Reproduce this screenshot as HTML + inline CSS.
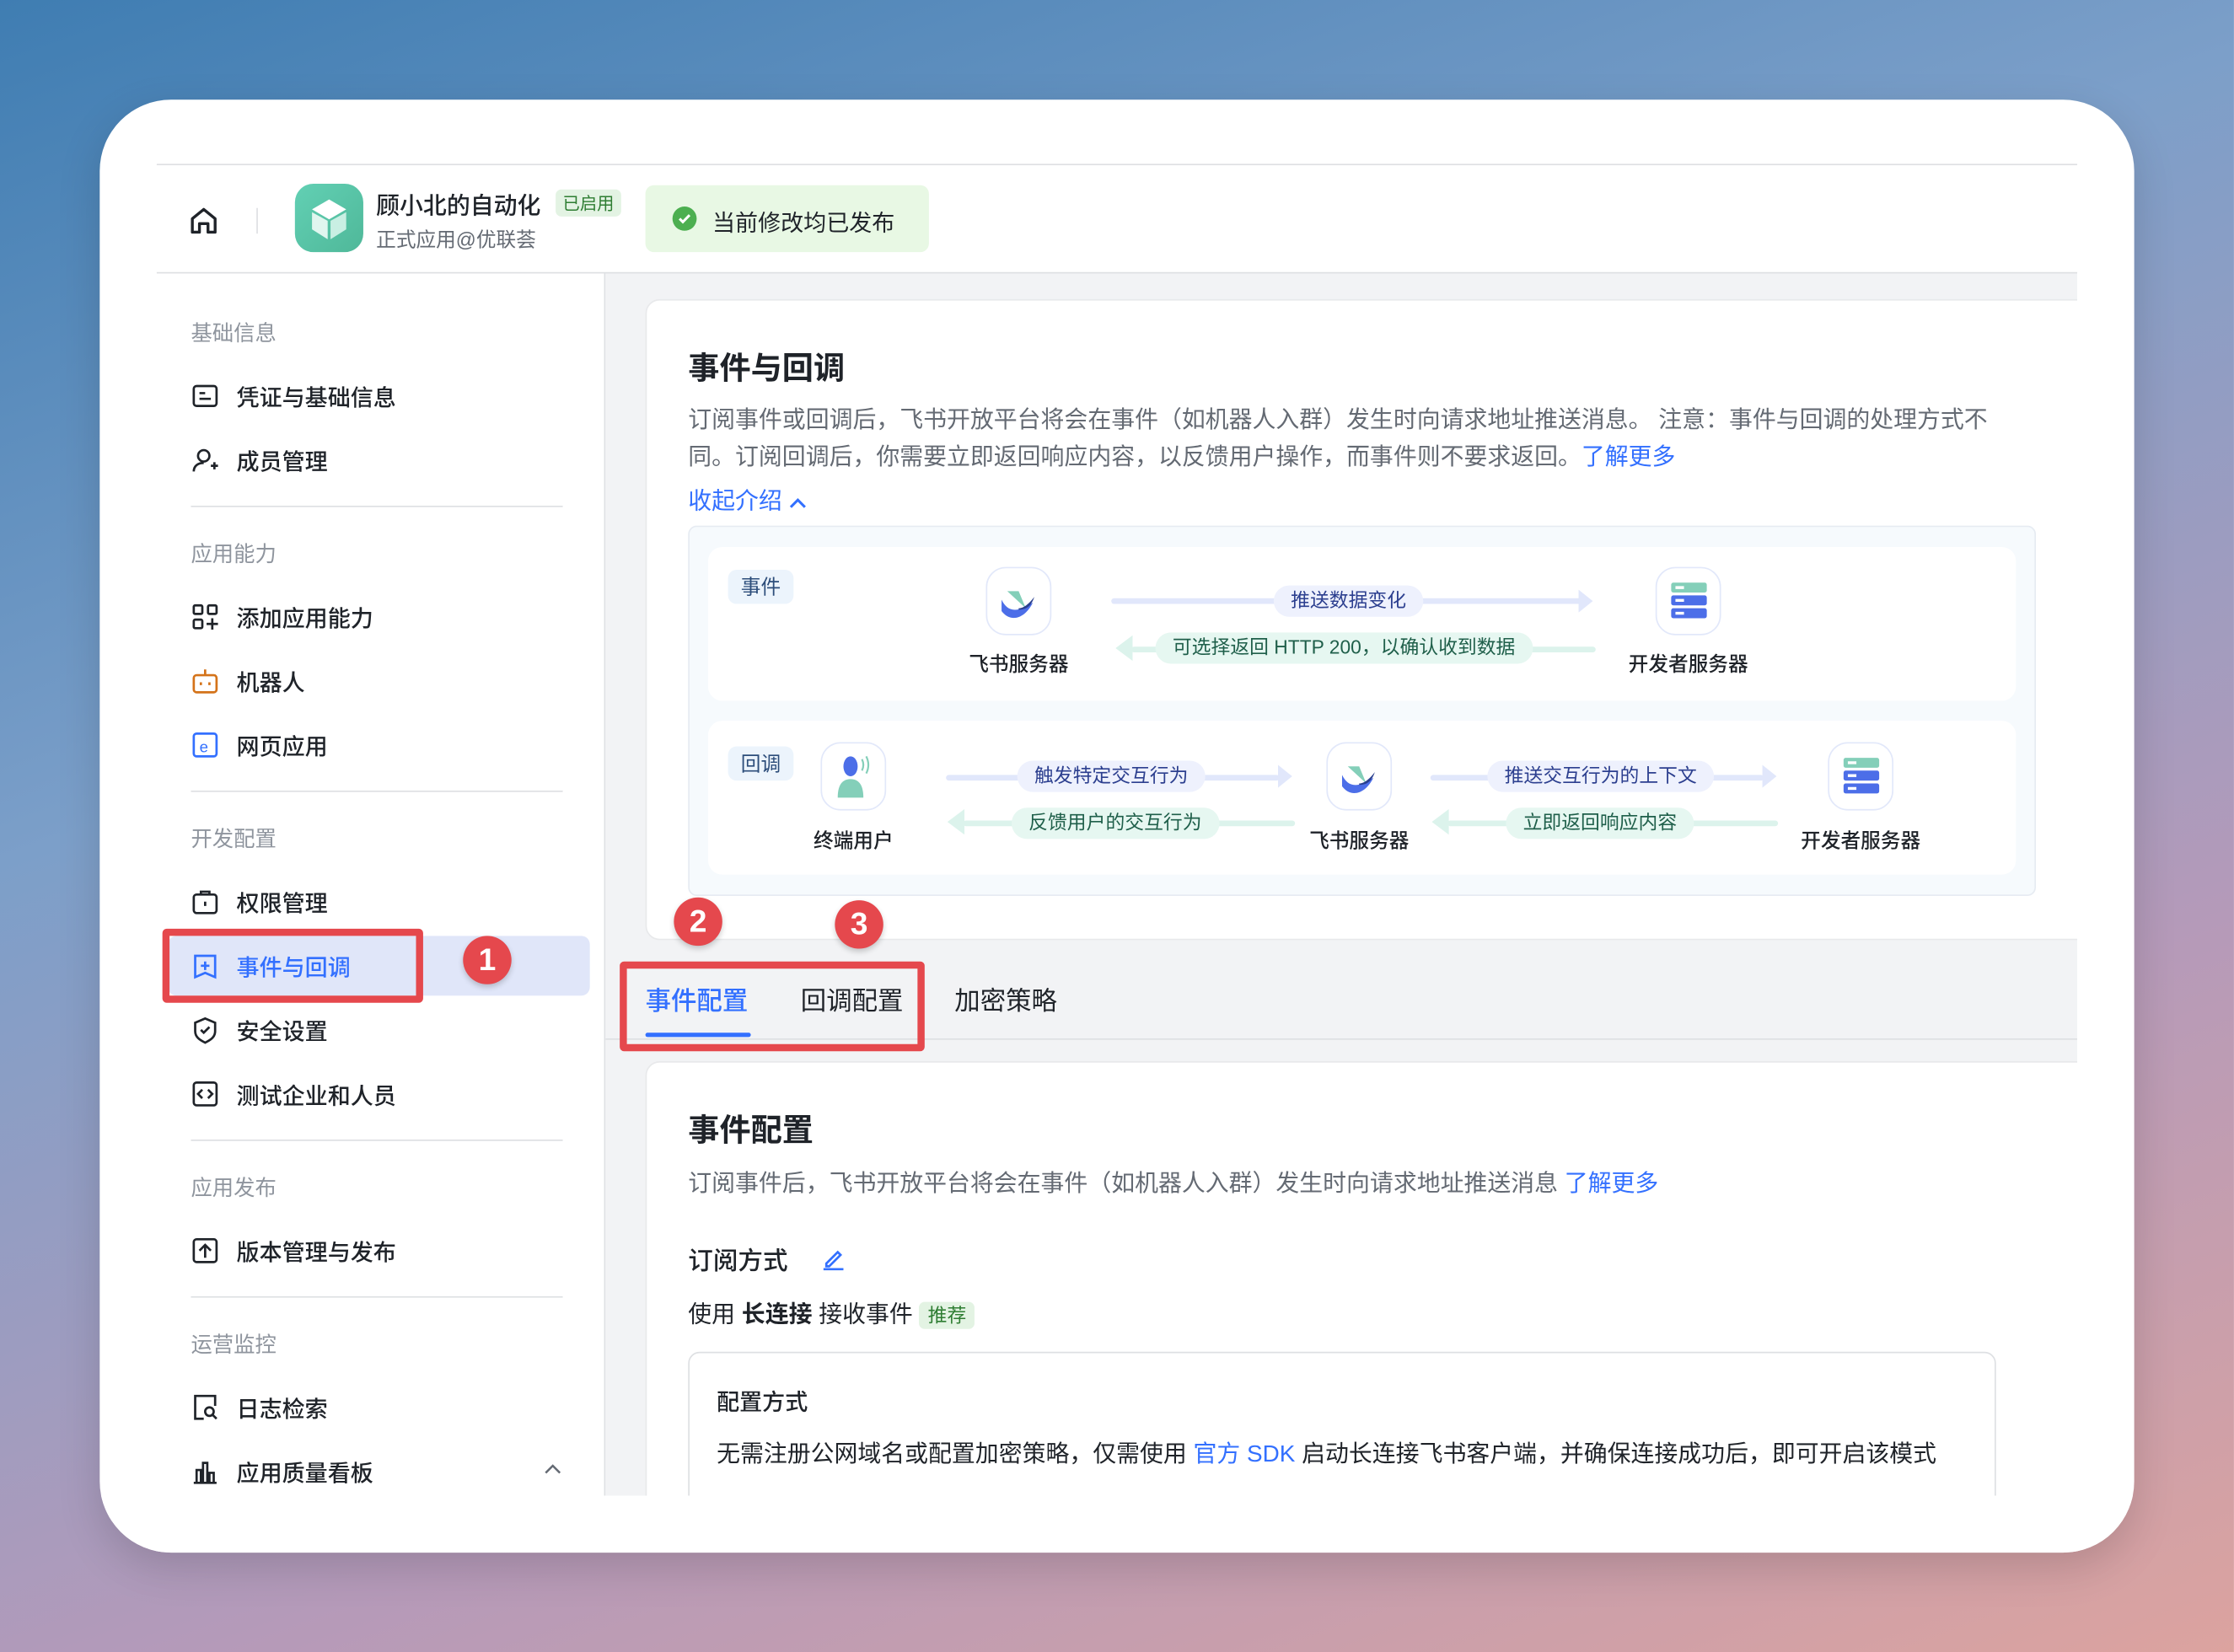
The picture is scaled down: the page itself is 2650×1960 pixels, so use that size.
<!DOCTYPE html>
<html><head><meta charset="utf-8"><style>
*{margin:0;padding:0;box-sizing:border-box}
html,body{width:2650px;height:1960px;overflow:hidden}
body{font-family:"Liberation Sans","Noto Sans CJK SC",sans-serif;color:#1f2329}
#w{position:absolute;left:0;top:0;width:1568px;height:1160px;transform:scale(1.69);transform-origin:0 0;background:linear-gradient(160deg,#3f7db2 0%,#7c9fc9 35%,#b59ab9 70%,#dca39f 100%)}
.a{position:absolute}
#card{left:70px;top:70px;width:1428px;height:1020px;background:#fff;border-radius:50px;box-shadow:0 10px 30px rgba(0,0,0,.15);overflow:hidden}
.nav{position:absolute;left:24px;font-size:16px;display:flex;align-items:center;gap:12px;color:#1f2329;font-weight:500}
.nav svg{width:20px;height:20px}
.grp{position:absolute;left:24px;font-size:15px;color:#8f959e}
.hr{position:absolute;left:24px;width:261px;height:1px;background:#dee0e3}
.pill{position:absolute;height:22px;line-height:22px;padding:0 12px;border-radius:11px;font-size:13.5px}
.pb{background:#eef1fd;color:#2c3f8f}
.pg{background:#e6f7f1;color:#1f5f4a}
.ln{position:absolute;height:4px;border-radius:2px}
.lb{background:#e1e7fb}.lg{background:#dcf3ec}
.lab{position:absolute;font-size:14px;font-weight:500;width:100px;text-align:center}
.ib{position:absolute;width:46px;height:48px;border:1.5px solid #e2e8fa;border-radius:14px;background:#fff}
.tag{position:absolute;background:#ecf4fc;color:#2c4d7a;font-size:14px;border-radius:6px;padding:2px 9px}
.red{position:absolute;border:5px solid #e5484d;border-radius:3px}
.num{position:absolute;width:34px;height:34px;border-radius:50%;background:#e5484d;color:#fff;font-weight:bold;font-size:22px;text-align:center;line-height:34px;box-shadow:0 2px 4px rgba(0,0,0,.2)}
</style></head><body><div id="w">
<div id="card" class="a">
 <div class="a" style="left:40px;top:45px;width:1348px;height:1px;background:#dee0e3"></div>
 <svg class="a" style="left:62px;top:74px" width="22" height="22" viewBox="0 0 22 22" fill="none" stroke="#1f2329" stroke-width="2"><path d="M3 9.5L11 3l8 6.5V19h-5v-6h-6v6H3z" stroke-linejoin="round"/></svg>
 <div class="a" style="left:110px;top:76px;width:1px;height:18px;background:#dee0e3"></div>
 <div class="a" style="left:137px;top:59px;width:48px;height:48px;border-radius:13px;background:linear-gradient(135deg,#62d0b4,#4fb899)">
  <svg width="48" height="48" viewBox="0 0 48 48"><path d="M24 11l12 7-12 7-12-7z" fill="#fff"/><path d="M12 20l11 6v13l-11-7z" fill="#e0f6ef"/><path d="M36 20l-11 6v13l11-7z" fill="#c9efe3"/></svg></div>
 <div class="a" style="left:194px;top:61px;font-size:16.5px;font-weight:500">顾小北的自动化</div>
 <div class="a" style="left:320px;top:63px;font-size:12px;color:#2e7d32;background:#e3f3e3;padding:1px 5px;border-radius:4px">已启用</div>
 <div class="a" style="left:194px;top:88px;font-size:14px;color:#646a73">正式应用@优联荟</div>
 <div class="a" style="left:383px;top:60px;width:199px;height:47px;background:#e8f8e4;border-radius:6px"></div>
 <div class="a" style="left:402px;top:75px;width:17px;height:17px;border-radius:50%;background:#4caf50"><svg width="17" height="17" viewBox="0 0 17 17"><path d="M5 8.5l2.3 2.3L12 6" stroke="#fff" stroke-width="1.8" fill="none"/></svg></div>
 <div class="a" style="left:430px;top:73px;font-size:16px">当前修改均已发布</div>
 <div class="a" style="left:40px;top:121px;width:1348px;height:1px;background:#dee0e3"></div>
 <div class="a" style="left:40px;top:122px;width:314px;height:858px;background:#fff">
  <div class="grp" style="top:31px">基础信息</div>
  <div class="nav" style="top:74px"><svg viewBox="0 0 20 20" fill="none" stroke="#1f2329" stroke-width="1.6"><rect x="2" y="3" width="16" height="14" rx="2"/><path d="M6 8h4M6 12h8"/></svg>凭证与基础信息</div>
  <div class="nav" style="top:119px"><svg viewBox="0 0 20 20" fill="none" stroke="#1f2329" stroke-width="1.6"><circle cx="9" cy="7" r="4"/><path d="M2 18c0-4 3-6 7-6M14 14h5M16.5 11.5v5"/></svg>成员管理</div>
  <div class="hr" style="top:163px"></div>
  <div class="grp" style="top:186px">应用能力</div>
  <div class="nav" style="top:229px"><svg viewBox="0 0 20 20" fill="none" stroke="#1f2329" stroke-width="1.6"><rect x="2" y="2" width="6" height="6" rx="1"/><rect x="12" y="2" width="6" height="6" rx="1"/><rect x="2" y="12" width="6" height="6" rx="1"/><path d="M15 11v8M11 15h8"/></svg>添加应用能力</div>
  <div class="nav" style="top:274px"><svg viewBox="0 0 20 20" fill="none" stroke="#d4731a" stroke-width="1.6"><rect x="2" y="6" width="16" height="12" rx="2"/><path d="M10 2v4M7 11v2M13 11v2"/></svg>机器人</div>
  <div class="nav" style="top:319px"><svg viewBox="0 0 20 20" fill="none" stroke="#3370ff" stroke-width="1.6"><rect x="2" y="2" width="16" height="16" rx="2"/><text x="6" y="15" font-size="11" fill="#3370ff" stroke="none">e</text></svg>网页应用</div>
  <div class="hr" style="top:363px"></div>
  <div class="grp" style="top:386px">开发配置</div>
  <div class="nav" style="top:429px"><svg viewBox="0 0 20 20" fill="none" stroke="#1f2329" stroke-width="1.6"><rect x="2" y="5" width="16" height="13" rx="2"/><path d="M7 5V3h6v2M10 10v3"/></svg>权限管理</div>
  <div class="a" style="left:8px;top:465px;width:296px;height:42px;background:#e0e6f9;border-radius:6px"></div>
  <div class="nav" style="top:474px;color:#3370ff"><svg viewBox="0 0 20 20" fill="none" stroke="#3370ff" stroke-width="1.6"><path d="M3 3h14v15l-7-3-7 3z"/><path d="M10 7v6M7 10h6"/></svg>事件与回调</div>
  <div class="nav" style="top:519px"><svg viewBox="0 0 20 20" fill="none" stroke="#1f2329" stroke-width="1.6"><path d="M10 2l7 3v6c0 4-3 6-7 8-4-2-7-4-7-8V5z"/><path d="M7 10l2 2 4-4"/></svg>安全设置</div>
  <div class="nav" style="top:564px"><svg viewBox="0 0 20 20" fill="none" stroke="#1f2329" stroke-width="1.6"><rect x="2" y="2" width="16" height="16" rx="2"/><path d="M8 7l-3 3 3 3M12 7l3 3-3 3"/></svg>测试企业和人员</div>
  <div class="hr" style="top:608px"></div>
  <div class="grp" style="top:631px">应用发布</div>
  <div class="nav" style="top:674px"><svg viewBox="0 0 20 20" fill="none" stroke="#1f2329" stroke-width="1.6"><rect x="2" y="2" width="16" height="16" rx="2"/><path d="M10 15V6M6 10l4-4 4 4"/></svg>版本管理与发布</div>
  <div class="hr" style="top:718px"></div>
  <div class="grp" style="top:741px">运营监控</div>
  <div class="nav" style="top:784px"><svg viewBox="0 0 20 20" fill="none" stroke="#1f2329" stroke-width="1.6"><path d="M17 9V2H3v16h6"/><circle cx="13" cy="13" r="3"/><path d="M15 15l3 3"/></svg>日志检索</div>
  <div class="nav" style="top:829px"><svg viewBox="0 0 20 20" fill="none" stroke="#1f2329" stroke-width="1.6"><path d="M2 18h16M4 18V9h3v9M8.5 18V4h3v14M13 18v-7h3v7"/></svg>应用质量看板</div>
  <svg class="a" style="left:272px;top:835px" width="12" height="8" viewBox="0 0 12 8"><path d="M1 7l5-5 5 5" stroke="#646a73" stroke-width="1.5" fill="none"/></svg>
 </div>
 <div class="a" style="left:354px;top:122px;width:1px;height:858px;background:#dee0e3"></div>
 <div class="a" style="left:355px;top:122px;width:1033px;height:858px;background:#f2f3f5;overflow:hidden">
  <div class="a" style="left:28px;top:18px;width:1020px;height:450px;background:#fff;border-radius:10px;border:1px solid #e8e9eb">
   <div class="a" style="left:29px;top:30px;font-size:22px;font-weight:bold">事件与回调</div>
   <div class="a" style="left:29px;top:71px;width:924px;font-size:16.5px;line-height:26px;color:#646a73">订阅事件或回调后，飞书开放平台将会在事件（如机器人入群）发生时向请求地址推送消息。 注意：事件与回调的处理方式不同。订阅回调后，你需要立即返回响应内容，以反馈用户操作，而事件则不要求返回。<span style="color:#3370ff">了解更多</span></div>
   <div class="a" style="left:29px;top:127px;font-size:16.5px;color:#3370ff">收起介绍 <svg width="12" height="8" viewBox="0 0 12 8"><path d="M1 7l5-5 5 5" stroke="#3370ff" stroke-width="1.8" fill="none"/></svg></div>
   <div class="a" style="left:29px;top:158px;width:946px;height:260px;background:#f6fafd;border:1px solid #e6ebf2;border-radius:6px">
    <div class="a" style="left:13px;top:14px;width:918px;height:108px;background:#fff;border-radius:10px"></div>
    <div class="a" style="left:13px;top:136px;width:918px;height:108px;background:#fff;border-radius:10px"></div>
    <div class="tag" style="left:27px;top:30px">事件</div>
    <div class="tag" style="left:27px;top:154px">回调</div>
    <div class="ib" style="left:208px;top:28px"><svg width="44" height="46" viewBox="0 0 44 46"><path d="M14 16l8 0 5 12z" fill="#84cfb9"/><path d="M10 22c4 8 10 10 22 2-6 12-16 14-22 6z" fill="#4c6ee8"/><path d="M22 28c4 0 8-4 11-8-2 6-5 9-11 9z" fill="#2a3f8f"/></svg></div>
    <div class="lab" style="left:181px;top:86px">飞书服务器</div>
    <div class="ib" style="left:678px;top:28px"><svg width="44" height="46" viewBox="0 0 44 46"><rect x="10" y="10" width="25" height="7" rx="1.5" fill="#84cfb9"/><rect x="10" y="19" width="25" height="7" rx="1.5" fill="#4c6ee8"/><rect x="10" y="28" width="25" height="7" rx="1.5" fill="#4c6ee8"/><path d="M13 13.5h6M13 22.5h6M13 31.5h6" stroke="#fff" stroke-width="2"/></svg></div>
    <div class="lab" style="left:651px;top:86px">开发者服务器</div>
    <div class="ln lb" style="left:296px;top:50px;width:330px"></div>
    <svg class="a" style="left:624px;top:44px" width="10" height="16"><path d="M0 0l10 8-10 8z" fill="#e1e7fb"/></svg>
    <div class="pill pb" style="left:410px;top:41px">推送数据变化</div>
    <div class="ln lg" style="left:310px;top:84px;width:326px"></div>
    <svg class="a" style="left:299px;top:76px" width="12" height="18"><path d="M12 0L0 9l12 9z" fill="#dcf3ec"/></svg>
    <div class="pill pg" style="left:327px;top:74px">可选择返回 HTTP 200，以确认收到数据</div>
    <div class="ib" style="left:92px;top:151px"><svg width="44" height="46" viewBox="0 0 44 46"><ellipse cx="20" cy="16" rx="5" ry="7" fill="#4c6ee8"/><path d="M11 38c0-10 4-13 9-13s9 3 9 13z" fill="#84cfb9"/><path d="M28 11q2 4 0 8M31 9q3 6 0 12" stroke="#84cfb9" stroke-width="1.3" fill="none"/></svg></div>
    <div class="lab" style="left:65px;top:210px">终端用户</div>
    <div class="ib" style="left:447px;top:151px"><svg width="44" height="46" viewBox="0 0 44 46"><path d="M14 16l8 0 5 12z" fill="#84cfb9"/><path d="M10 22c4 8 10 10 22 2-6 12-16 14-22 6z" fill="#4c6ee8"/><path d="M22 28c4 0 8-4 11-8-2 6-5 9-11 9z" fill="#2a3f8f"/></svg></div>
    <div class="lab" style="left:420px;top:210px">飞书服务器</div>
    <div class="ib" style="left:799px;top:151px"><svg width="44" height="46" viewBox="0 0 44 46"><rect x="10" y="10" width="25" height="7" rx="1.5" fill="#84cfb9"/><rect x="10" y="19" width="25" height="7" rx="1.5" fill="#4c6ee8"/><rect x="10" y="28" width="25" height="7" rx="1.5" fill="#4c6ee8"/><path d="M13 13.5h6M13 22.5h6M13 31.5h6" stroke="#fff" stroke-width="2"/></svg></div>
    <div class="lab" style="left:772px;top:210px">开发者服务器</div>
    <div class="ln lb" style="left:180px;top:174px;width:234px"></div>
    <svg class="a" style="left:413px;top:167px" width="10" height="16"><path d="M0 0l10 8-10 8z" fill="#e1e7fb"/></svg>
    <div class="pill pb" style="left:230px;top:164px">触发特定交互行为</div>
    <div class="ln lg" style="left:192px;top:206px;width:233px"></div>
    <svg class="a" style="left:181px;top:198px" width="12" height="18"><path d="M12 0L0 9l12 9z" fill="#dcf3ec"/></svg>
    <div class="pill pg" style="left:226px;top:197px">反馈用户的交互行为</div>
    <div class="ln lb" style="left:520px;top:174px;width:234px"></div>
    <svg class="a" style="left:753px;top:167px" width="10" height="16"><path d="M0 0l10 8-10 8z" fill="#e1e7fb"/></svg>
    <div class="pill pb" style="left:560px;top:164px">推送交互行为的上下文</div>
    <div class="ln lg" style="left:532px;top:206px;width:232px"></div>
    <svg class="a" style="left:521px;top:198px" width="12" height="18"><path d="M12 0L0 9l12 9z" fill="#dcf3ec"/></svg>
    <div class="pill pg" style="left:573px;top:197px">立即返回响应内容</div>
   </div>
  </div>
  <div class="a" style="left:0;top:537px;width:1033px;height:1px;background:#dee0e3"></div>
  <div class="a" style="left:28px;top:497px;font-size:18px;color:#3370ff;font-weight:500">事件配置</div>
  <div class="a" style="left:28px;top:533px;width:74px;height:3px;background:#3370ff;border-radius:2px"></div>
  <div class="a" style="left:137px;top:497px;font-size:18px">回调配置</div>
  <div class="a" style="left:245px;top:497px;font-size:18px">加密策略</div>
  <div class="a" style="left:28px;top:553px;width:1020px;height:330px;background:#fff;border-radius:10px;border:1px solid #e8e9eb">
   <div class="a" style="left:29px;top:30px;font-size:22px;font-weight:bold">事件配置</div>
   <div class="a" style="left:29px;top:71px;font-size:16.5px;color:#646a73">订阅事件后，飞书开放平台将会在事件（如机器人入群）发生时向请求地址推送消息 <span style="color:#3370ff">了解更多</span></div>
   <div class="a" style="left:29px;top:126px;font-size:17.5px;font-weight:500">订阅方式</div>
   <svg class="a" style="left:122px;top:129px" width="18" height="18" viewBox="0 0 18 18" fill="none" stroke="#3370ff" stroke-width="1.6"><path d="M4 12l8-8 2 2-8 8H4zM2 16h14"/></svg>
   <div class="a" style="left:29px;top:163px;font-size:16.5px">使用 <b>长连接</b> 接收事件 <span style="font-size:13.5px;background:#e3f3e3;color:#2e7d32;padding:2px 6px;border-radius:4px">推荐</span></div>
   <div class="a" style="left:29px;top:203px;width:918px;height:110px;border:1px solid #dee0e3;border-radius:8px">
    <div class="a" style="left:19px;top:21px;font-size:16px;font-weight:500">配置方式</div>
    <div class="a" style="left:19px;top:57px;font-size:16.5px">无需注册公网域名或配置加密策略，仅需使用 <span style="color:#3370ff">官方 SDK</span> 启动长连接飞书客户端，并确保连接成功后，即可开启该模式</div>
   </div>
  </div>
 </div>
 <div class="a" style="left:0;top:980px;width:1428px;height:40px;background:#fff"></div>
</div>
<div class="red" style="left:114px;top:652px;width:183px;height:52px"></div>
<div class="num" style="left:325px;top:657px">1</div>
<div class="red" style="left:435px;top:675px;width:214px;height:63px"></div>
<div class="num" style="left:473px;top:630px">2</div>
<div class="num" style="left:586px;top:632px">3</div>
</div></body></html>
